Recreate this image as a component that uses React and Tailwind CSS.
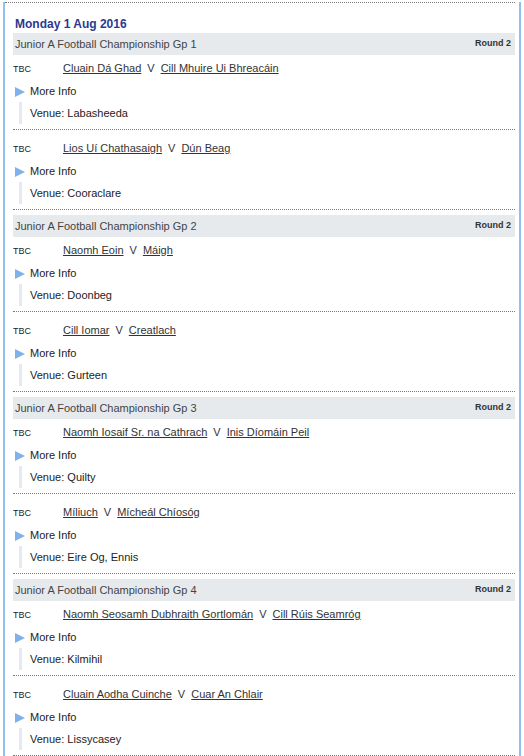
import React from "react";

const groups = [
  {
    name: "Junior A Football Championship Gp 1",
    round: "Round 2",
    matches: [
      { home: "Cluain Dá Ghad", away: "Cill Mhuire Ui Bhreacáin", venue: "Labasheeda" },
      { home: "Lios Uí Chathasaigh", away: "Dún Beag", venue: "Cooraclare" },
    ],
  },
  {
    name: "Junior A Football Championship Gp 2",
    round: "Round 2",
    matches: [
      { home: "Naomh Eoin", away: "Máigh", venue: "Doonbeg" },
      { home: "Cill Iomar", away: "Creatlach", venue: "Gurteen" },
    ],
  },
  {
    name: "Junior A Football Championship Gp 3",
    round: "Round 2",
    matches: [
      { home: "Naomh Iosaif Sr. na Cathrach", away: "Inis Díomáin Peil", venue: "Quilty" },
      { home: "Míliuch", away: "Mícheál Chíosóg", venue: "Eire Og, Ennis" },
    ],
  },
  {
    name: "Junior A Football Championship Gp 4",
    round: "Round 2",
    matches: [
      { home: "Naomh Seosamh Dubhraith Gortlomán", away: "Cill Rúis Seamróg", venue: "Kilmihil" },
      { home: "Cluain Aodha Cuinche", away: "Cuar An Chlair", venue: "Lissycasey" },
    ],
  },
];

const Match = ({ match, first }) => (
  <div className={`${first ? "pt-[4px]" : "pt-[9px]"} pb-[5px] border-b border-dotted border-[#7a7a7a]`}>
    <div className="h-[18px] leading-[19px] whitespace-nowrap">
      <span className="inline-block w-[50px] text-[9px] text-[#222]">TBC</span>
      <a href="#" className="underline text-[#333]">{match.home}</a>
      <span className="mx-[6px] text-[#333]">V</span>
      <a href="#" className="underline text-[#333]">{match.away}</a>
    </div>
    <div className="mt-[4px] h-[21px] flex items-center">
      <svg width="10" height="10" viewBox="0 0 10 10" className="ml-[2px] mr-[5px]">
        <polygon points="0,0 10,5 0,10" fill="#7fb2ea" />
      </svg>
      <span className="text-[#222]">More Info</span>
    </div>
    <div className="ml-[6px] h-[22px] border-l-[3px] border-[#e4e9f2] pl-[8px] flex items-center text-[#222]">
      Venue: {match.venue}
    </div>
  </div>
);

export default function App() {
  return (
    <div className="bg-white min-h-[756px] text-[11px]" style={{ fontFamily: '"Liberation Sans", Arial, sans-serif' }}>
      <div className="ml-[3px] w-[518px] min-h-[756px] border-x-2 border-[#93bfec]">
        <div className="mt-[2px] mr-[4px] border-t border-dotted border-[#7a7a7a]">
          <div className="pl-[8px]">
            <div className="pt-[13px] pb-[1px] pl-[2px] text-[12px] leading-[16px] font-bold text-[#2b3990]">
              Monday 1 Aug 2016
            </div>
            {groups.map((g, gi) => (
              <div key={gi} className={gi > 0 ? "mt-[5px]" : ""}>
                <div className="h-[22px] bg-[#e7eaed] flex items-center justify-between pl-[2px] pr-[4px] text-[#444]">
                  <span>{g.name}</span>
                  <span className="text-[9px] font-bold text-[#333]">{g.round}</span>
                </div>
                {g.matches.map((m, mi) => (
                  <Match key={mi} match={m} first={mi === 0} />
                ))}
              </div>
            ))}
          </div>
        </div>
      </div>
    </div>
  );
}
